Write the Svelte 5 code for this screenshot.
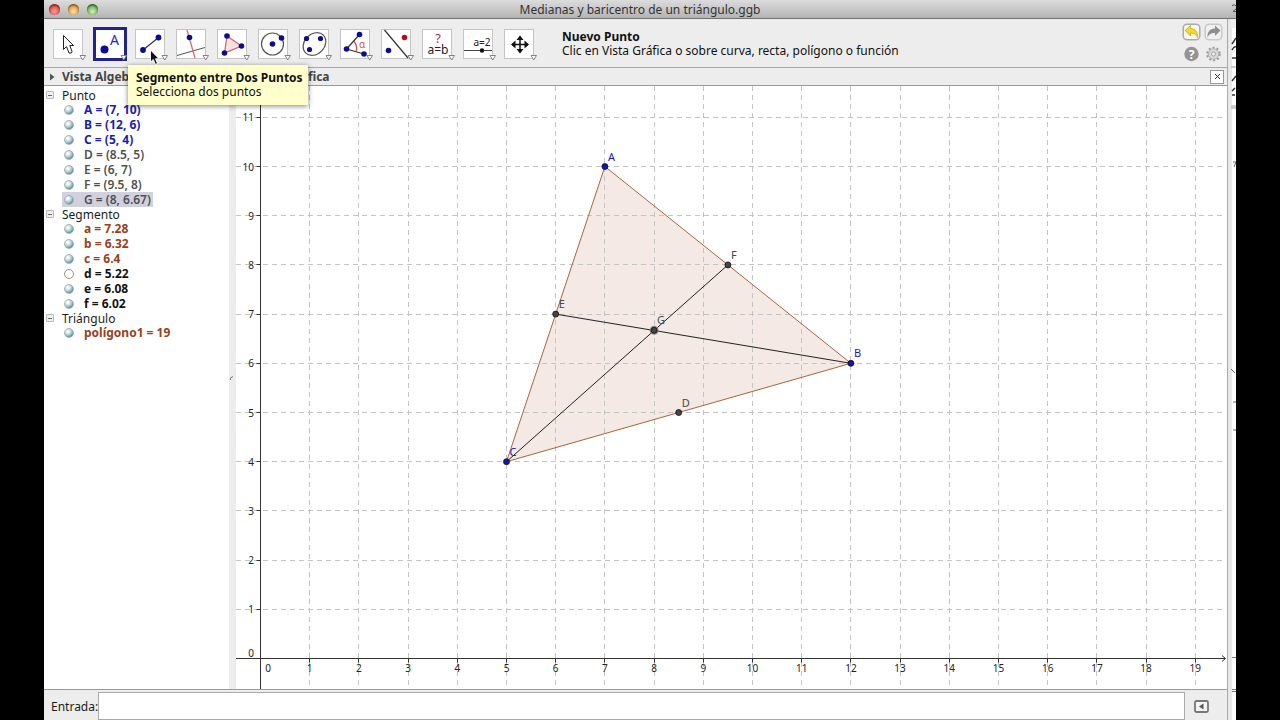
<script>
  const tools = [
    { id: 'move', label: 'Elige y Mueve' },
    { id: 'point', label: 'Nuevo Punto', selected: true },
    { id: 'segment', label: 'Segmento entre Dos Puntos' },
    { id: 'perpendicular', label: 'Recta Perpendicular' },
    { id: 'polygon', label: 'Polígono' },
    { id: 'circle', label: 'Circunferencia' },
    { id: 'conic', label: 'Elipse' },
    { id: 'angle', label: 'Ángulo' },
    { id: 'mirror', label: 'Refleja Objeto' },
    { id: 'relation', label: 'Relación' },
    { id: 'slider', label: 'Deslizador' },
    { id: 'pan', label: 'Desplaza Vista Gráfica' }
  ];

  const groups = [
    {
      name: 'Punto',
      items: [
        { text: 'A = (7, 10)', tone: 'blue', on: true },
        { text: 'B = (12, 6)', tone: 'blue', on: true },
        { text: 'C = (5, 4)', tone: 'blue', on: true },
        { text: 'D = (8.5, 5)', tone: 'gray', on: true },
        { text: 'E = (6, 7)', tone: 'gray', on: true },
        { text: 'F = (9.5, 8)', tone: 'gray', on: true },
        { text: 'G = (8, 6.67)', tone: 'gray', on: true, selected: true }
      ]
    },
    {
      name: 'Segmento',
      items: [
        { text: 'a = 7.28', tone: 'brown', on: true },
        { text: 'b = 6.32', tone: 'brown', on: true },
        { text: 'c = 6.4', tone: 'brown', on: true },
        { text: 'd = 5.22', tone: 'black', on: false },
        { text: 'e = 6.08', tone: 'black', on: true },
        { text: 'f = 6.02', tone: 'black', on: true }
      ]
    },
    { name: 'Triángulo', items: [{ text: 'polígono1 = 19', tone: 'brown', on: true }] }
  ];

  // Graph units to drawing coordinates
  const unit = 49.2;
  const ox = 24.5;
  const oy = 572.5;
  const px = (x) => ox + x * unit;
  const py = (y) => oy - y * unit;
  const grid = (v) => Math.round(v - 0.5) + 0.5;
  const xs = Array.from({ length: 19 }, (_, i) => i + 1);
  const ys = Array.from({ length: 11 }, (_, i) => i + 1);
  const pts = {
    A: [7, 10], B: [12, 6], C: [5, 4],
    D: [8.5, 5], E: [6, 7], F: [9.5, 8], G: [8, 6.67]
  };
  const free = ['A', 'B', 'C'];
  const line = (a, b) => ({
    x1: px(pts[a][0]), y1: py(pts[a][1]), x2: px(pts[b][0]), y2: py(pts[b][1])
  });
  const triangle = free.map((n) => `${px(pts[n][0])},${py(pts[n][1])}`).join(' ');
</script>

<div class="screen">
  <div class="window">
    <header class="titlebar">
      <div class="lights">
        <button class="light red" aria-label="Cerrar"></button>
        <button class="light amber" aria-label="Minimizar"></button>
        <button class="light green" aria-label="Ampliar"></button>
      </div>
      <h1>Medianas y baricentro de un triángulo.ggb</h1>
      <svg class="corner" width="4" height="12" viewBox="0 0 4 12" aria-hidden="true">
        <path d="M0 2.500Q3 1 4 3M4 6L1 8.500H4" fill="none" stroke="#555" />
      </svg>
    </header>

    <div class="body">
      <main class="app">
        <div class="toolbar">
          <div class="tools">
            {#each tools as tool}
              <div class="slot">
                <button class="tool" aria-label={tool.label} aria-pressed={!!tool.selected}>
                  <svg width="41" height="40" viewBox="0 0 41 40">
                    {#if tool.selected}
                      <rect x="1.5" y="4.5" width="31" height="31" fill="#fff" stroke="#23238e" stroke-width="3" />
                    {:else}
                      <rect x="1.5" y="5.5" width="29" height="29" fill="#fff" stroke="#c4c4c4" />
                    {/if}
                    {#if tool.id === 'move'}
                      <path d="M11.5 11.5V25.5L14.5 22.5L17 29H19.5L20 27.5L17.8 21.5H21.5Z" fill="#fff" stroke="#222" stroke-width="1" />
                    {:else if tool.id === 'point'}
                      <circle cx="11.5" cy="25.5" r="4" fill="#0b0b96" />
                      <text x="17" y="21" font-size="14" fill="#2a2ab4">A</text>
                    {:else if tool.id === 'segment'}
                      <path d="M9 26L24.5 13.5" stroke="#333" stroke-width="1.2" />
                      <circle cx="9" cy="26" r="2.9" fill="#0b0b96" />
                      <circle cx="24.5" cy="13.5" r="2.9" fill="#0b0b96" />
                    {:else if tool.id === 'perpendicular'}
                      <path d="M2 31.5L30 23.5" stroke="#555" />
                      <path d="M12 6L20 34" stroke="#d86a6a" stroke-width="1.3" />
                      <circle cx="14.5" cy="13.5" r="2.8" fill="#0b0b96" />
                    {:else if tool.id === 'polygon'}
                      <path d="M11 12L25.5 22L8.5 29Z" fill="#fbe2e0" stroke="#c86464" stroke-width="1.2" />
                      <circle cx="11" cy="12" r="2.8" fill="#0b0b96" />
                      <circle cx="25.5" cy="22" r="2.8" fill="#0b0b96" />
                      <circle cx="8.5" cy="29" r="2.8" fill="#0b0b96" />
                    {:else if tool.id === 'circle'}
                      <circle cx="15.5" cy="20" r="11" fill="none" stroke="#555" stroke-width="1.2" />
                      <circle cx="15.5" cy="20" r="2.8" fill="#0b0b96" />
                      <circle cx="24.5" cy="14" r="2.8" fill="#0b0b96" />
                    {:else if tool.id === 'conic'}
                      <ellipse cx="16.5" cy="20" rx="12.5" ry="10" transform="rotate(-45 16.5 20)" fill="none" stroke="#555" stroke-width="1.2" />
                      <circle cx="8.5" cy="14.5" r="2.6" fill="#0b0b96" />
                      <circle cx="22.5" cy="14.5" r="2.6" fill="#0b0b96" />
                      <circle cx="11.5" cy="25.5" r="2.6" fill="#0b0b96" />
                    {:else if tool.id === 'angle'}
                      <path d="M15 17.5A10 10 0 0 1 17 27.5" fill="none" stroke="#d04848" stroke-width="1.2" />
                      <path d="M20.5 10.5L7.5 25L25 30" fill="none" stroke="#333" stroke-width="1.2" />
                      <text x="20" y="23.5" font-size="10" fill="#c8643c">α</text>
                      <circle cx="20.5" cy="10.5" r="2.8" fill="#0b0b96" />
                      <circle cx="7.5" cy="25" r="2.8" fill="#0b0b96" />
                      <circle cx="25" cy="30" r="2.8" fill="#0b0b96" />
                    {:else if tool.id === 'mirror'}
                      <path d="M4.5 6L28 34" stroke="#333" stroke-width="1.2" />
                      <circle cx="8.5" cy="26.5" r="2.8" fill="#0b0b96" />
                      <circle cx="24.5" cy="13.5" r="2.8" fill="#b01010" />
                    {:else if tool.id === 'relation'}
                      <text x="17" y="19" font-size="13" text-anchor="middle" fill="#c01c38">?</text>
                      <text x="17" y="30" font-size="12" text-anchor="middle" fill="#222">a=b</text>
                    {:else if tool.id === 'slider'}
                      <text x="20" y="22" font-size="10" text-anchor="middle" fill="#222">a=2</text>
                      <path d="M2 26.5H30" stroke="#444" />
                      <circle cx="20" cy="26.5" r="2.2" fill="#111" />
                    {:else}
                      <path d="M9 20.5H25M17 12.5V28.5" stroke="#111" stroke-width="1.5" />
                      <path d="M8 20.5L12.5 16.5V24.5ZM26 20.5L21.500 16.5V24.5ZM17 11.5L13.5 16H20.5ZM17 29.5L13.5 25H20.5Z" fill="#111" />
                    {/if}
                    <path d="M28 31.5H33.5L30.75 36Z" fill="#fff" stroke="#777" stroke-width="0.9" />
                  </svg>
                </button>
                {#if tool.id === 'segment'}
                  <div class="tooltip" role="tooltip">
                    <strong>{tool.label}</strong>
                    <span>Selecciona dos puntos</span>
                  </div>
                  <svg class="cursor" width="12" height="18" viewBox="0 0 12 18" aria-hidden="true">
                    <path d="M1.5 1V13L4.3 10.5L6.5 15.5L8.5 14.5L6.5 9.8H10Z" fill="#111" stroke="#fff" stroke-width="0.9" />
                  </svg>
                {/if}
              </div>
            {/each}
          </div>
          <p class="help"><strong>Nuevo Punto</strong><span>Clic en Vista Gráfica o sobre curva, recta, polígono o función</span></p>
          <div class="actions">
            <button aria-label="Deshace">
              <svg width="19" height="18" viewBox="0 0 19 18">
                <rect x="1.2" y="1.2" width="16.6" height="15.6" rx="4" fill="#f6f6f2" stroke="#aaa" stroke-width="1.5" />
                <path d="M3 7.5L8.5 2.5V5.5C13 5.5 16 8.5 15.5 14.5C14 11 12 10 8.5 10V13Z" fill="#f2dc28" stroke="#c8a818" stroke-width="0.8" />
              </svg>
            </button>
            <button aria-label="Rehace">
              <svg width="19" height="18" viewBox="0 0 19 18">
                <rect x="1.2" y="1.2" width="16.6" height="15.6" rx="4" fill="#f0f0f0" stroke="#c8c8c8" stroke-width="1.5" />
                <path d="M16.5 7.5L11 2.5V5.5C6.5 5.5 3 8.5 3.5 14.5C5 11 7.5 10 11 10V13Z" fill="#8e8e8e" />
              </svg>
            </button>
            <button aria-label="Ayuda">
              <svg width="19" height="18" viewBox="0 0 19 18">
                <circle cx="9.5" cy="9" r="7.2" fill="#949494" />
                <text x="9.5" y="13.5" font-size="12" font-weight="700" text-anchor="middle" fill="#fff">?</text>
              </svg>
            </button>
            <button aria-label="Preferencias">
              <svg width="19" height="18" viewBox="0 0 19 18">
                <circle cx="9.5" cy="9" r="6.3" fill="none" stroke="#9a9a9a" stroke-width="2" stroke-dasharray="2 2" />
                <circle cx="9.5" cy="9" r="5.2" fill="#d8d8d8" stroke="#a4a4a4" stroke-width="0.8" />
                <circle cx="9.5" cy="9" r="2" fill="#f2f2f2" stroke="#a4a4a4" />
              </svg>
            </button>
          </div>
        </div>

        <div class="views">
          <section class="algebra">
            <h2><svg width="12" height="10" viewBox="0 0 12 10" aria-hidden="true"><path d="M0 1.5L4.5 5L0 8.5Z" fill="#555" /></svg>Vista Algebraica</h2>
            <div class="tree">
              {#each groups as group}
                <h3><span class="fold"></span>{group.name}</h3>
                <ul>
                  {#each group.items as item}
                    <li>
                      <span class="item {item.tone}" class:selected={item.selected}>
                        <span class="marble" class:off={!item.on}></span>{item.text}
                      </span>
                    </li>
                  {/each}
                </ul>
              {/each}
            </div>
          </section>

          <div class="splitter" aria-hidden="true">
            <svg width="7" height="8" viewBox="0 0 7 8"><path d="M4 1.5L1.500 3V5" fill="none" stroke="#777" /></svg>
          </div>

          <section class="graphics">
            <h2>Vista Gráfica
              <button class="close" aria-label="Cerrar vista">
                <svg width="7" height="7" viewBox="0 0 7 7"><path d="M1 1L6 6M6 1L1 6" stroke="#333" /></svg>
              </button>
            </h2>
            <div class="plot">
              <svg viewBox="0 0 990 603" preserveAspectRatio="xMinYMax meet" role="img" aria-label="Triángulo ABC con sus medianas">
                <polygon points={triangle} fill="#f4e9e5" />
                <g stroke="#c4c4c4" stroke-dasharray="5 4">
                  {#each xs as n}
                    <line x1={grid(px(n))} x2={grid(px(n))} y1="0" y2="603" />
                  {/each}
                  {#each ys as n}
                    <line x1="0" x2="990" y1={grid(py(n))} y2={grid(py(n))} />
                  {/each}
                </g>
                <g stroke="#333">
                  <line x1={ox} x2={ox} y1="0" y2="603" />
                  <line x1="0" x2="989" y1={oy} y2={oy} />
                  <path d="M986 569.5L989.5 572.5L986 575.5" fill="none" />
                  {#each xs as n}
                    <line x1={grid(px(n))} x2={grid(px(n))} y1={oy} y2={oy + 4} />
                  {/each}
                  {#each ys as n}
                    <line x1={ox - 4} x2={ox} y1={grid(py(n))} y2={grid(py(n))} />
                  {/each}
                </g>
                <g class="scale">
                  <text x="32" y="586" text-anchor="middle">0</text>
                  <text x="18" y="571" text-anchor="end">0</text>
                  {#each xs as n}
                    <text x={px(n)} y="586" text-anchor="middle">{n}</text>
                  {/each}
                  {#each ys as n}
                    <text x="18" y={py(n) + 4} text-anchor="end">{n}</text>
                  {/each}
                </g>
                <polygon points={triangle} fill="none" stroke="#a8643c" />
                <line {...line('E', 'B')} stroke="#222" />
                <line {...line('C', 'F')} stroke="#222" />
                <circle cx={px(8)} cy={py(6.67)} r="4.5" fill="#888" />
                {#each Object.entries(pts) as [name, [x, y]]}
                  <circle cx={px(x)} cy={py(y)} r="3" fill={free.includes(name) ? '#1414b4' : '#444'} stroke="#111" stroke-width="0.8" />
                  <text class="name" x={px(x) + 3} y={py(y) - 6} fill={free.includes(name) ? '#1c1cb4' : '#484848'}>{name}</text>
                {/each}
              </svg>
            </div>
          </section>
        </div>

        <form class="entry" onsubmit={(e) => e.preventDefault()}>
          <label for="entrada">Entrada:</label>
          <input id="entrada" type="text" autocomplete="off" />
          <button type="button" aria-label="Ayuda de entrada">
            <svg width="15" height="13" viewBox="0 0 15 13">
              <rect x="1" y="1" width="13" height="11" rx="1.5" fill="#f4f4f4" stroke="#777" stroke-width="1.8" />
              <path d="M9.5 3.5V9.5L5 6.5Z" fill="#555" />
            </svg>
          </button>
        </form>
      </main>

      <div class="edge" aria-hidden="true">
        <svg width="5" height="701" viewBox="0 0 5 701">
          <rect width="5" height="9" fill="#eee" />
          <path d="M1 25L5 19M1 31Q3 27 5 28M1 39H5M1 62L5 57M1 72L4 69M1 76H4" stroke="#333" stroke-width="1.5" fill="none" />
          <rect y="47" width="5" height="2" fill="#ccc" />
          <rect y="86" width="5" height="4" fill="#ccc" />
          <path d="M2 143H5L3 148M0 350L4 354M2 383H5M2 411H5" stroke="#666" fill="none" />
          <path d="M1 638.5H5M1 670.5H5M1 672.5H5" stroke="#777" />
        </svg>
      </div>
    </div>
  </div>
</div>

<style>
  :global(body) {
    margin: 0;
    background: #000;
  }

  .screen {
    box-sizing: border-box;
    height: 100vh;
    padding: 0 44px;
    background: #000;
    font-family: 'Noto Sans', 'Open Sans', sans-serif;
    font-size: 12px;
    line-height: 15px;
    color: #1c1c1c;
  }

  .window {
    height: 100%;
    display: flex;
    flex-direction: column;
    overflow: hidden;
    background: #ededed;
  }

  h1, h2, h3, ul, p {
    margin: 0;
    padding: 0;
    font-size: inherit;
  }

  button {
    padding: 0;
    border: 0;
    background: none;
    font: inherit;
    display: block;
  }

  svg {
    display: block;
  }

  .titlebar {
    display: grid;
    grid-template-columns: 1fr auto 1fr;
    align-items: center;
    height: 18px;
    flex: none;
    border-bottom: 1px solid #707070;
    background: linear-gradient(#dcdcdc, #b4b4b4);
  }

  .titlebar h1 {
    font-weight: 400;
    color: #333;
  }

  .corner {
    justify-self: end;
  }

  .lights {
    display: flex;
    gap: 8px;
    padding-left: 5px;
  }

  .light {
    width: 11px;
    height: 11px;
    border-radius: 50%;
    box-shadow: inset 0 1px 2px rgba(0, 0, 0, 0.6);
  }

  .red { background: radial-gradient(circle at 50% 70%, #ff9c94, #d8443c 70%); }
  .amber { background: radial-gradient(circle at 50% 70%, #ffe09a, #e0963a 70%); }
  .green { background: radial-gradient(circle at 50% 70%, #d0f4b4, #64a850 70%); }

  .body {
    flex: 1;
    display: flex;
    min-height: 0;
  }

  .app {
    flex: 1;
    min-width: 0;
    display: flex;
    flex-direction: column;
  }

  .toolbar {
    display: flex;
    align-items: center;
    box-sizing: border-box;
    height: 49px;
    flex: none;
    padding: 2px 4px 0 8px;
    border-bottom: 1px solid #a8a8a8;
  }

  .tools {
    display: flex;
  }

  .slot {
    position: relative;
  }

  .tooltip {
    position: absolute;
    z-index: 2;
    left: -6px;
    top: 41px;
    padding: 6px 5px 6px 8px;
    background: #ffffcb;
    color: #111;
    white-space: nowrap;
    box-shadow: 0 1px 5px rgba(0, 0, 0, 0.5);
  }

  .tooltip strong,
  .tooltip span,
  .help strong,
  .help span {
    display: block;
    line-height: 14px;
  }

  .cursor {
    position: absolute;
    z-index: 3;
    left: 15px;
    top: 25px;
  }

  .help {
    flex: 1;
    padding-left: 18px;
    color: #111;
  }

  .actions {
    display: grid;
    grid-template-columns: auto auto;
    gap: 4px 3px;
    padding-bottom: 2px;
  }

  .views {
    flex: 1;
    display: flex;
    min-height: 0;
  }

  .algebra {
    flex: none;
    width: 185px;
    background: #fff;
  }

  h2 {
    display: flex;
    align-items: center;
    height: 17px;
    border-bottom: 1px solid #999;
    background: #ededed;
    color: #444;
  }

  .algebra h2 {
    padding-left: 6px;
  }

  .tree {
    padding: 2px 0 0 2px;
  }

  h3 {
    display: flex;
    align-items: center;
    gap: 8px;
    height: 14px;
    font-weight: 400;
  }

  .fold {
    box-sizing: border-box;
    width: 8px;
    height: 8px;
    border: 1px solid #b8b8b8;
    border-radius: 1px;
    background: linear-gradient(#666, #666) center / 4px 1px no-repeat #f0f0f0;
  }

  ul {
    list-style: none;
    padding-left: 16px;
  }

  li {
    display: flex;
    height: 15px;
  }

  .item {
    display: flex;
    align-items: center;
    gap: 10px;
    padding: 0 2px;
    font-weight: 700;
  }

  .blue { color: #1c1cb4; }
  .gray { color: #505050; font-weight: 600; }
  .brown { color: #993f1c; }
  .black { color: #111; }
  .selected { background: #d0d0de; }

  .marble {
    box-sizing: border-box;
    width: 10px;
    height: 10px;
    border-radius: 50%;
    border: 1px solid #a4b4b8;
    background: radial-gradient(circle at 35% 30%, #fff 10%, #a4c8d0 50%, #34606c 95%);
  }

  .marble.off {
    border-color: #a09080;
    background: #fff;
  }

  .splitter {
    flex: none;
    display: flex;
    align-items: center;
    width: 7px;
    background: #ececec;
  }

  .graphics {
    flex: 1;
    min-width: 0;
    display: flex;
    flex-direction: column;
    background: #fff;
  }

  .graphics h2 {
    flex: none;
    justify-content: space-between;
    padding: 0 3px 0 18px;
  }

  .close {
    box-sizing: border-box;
    display: grid;
    place-items: center;
    width: 14px;
    height: 14px;
    border: 1px solid #999;
    background: #fff;
  }

  .plot {
    flex: 1;
    min-height: 0;
  }

  .plot svg {
    width: 100%;
    height: 100%;
  }

  .scale {
    font-size: 10px;
    fill: #222;
  }

  .name {
    font-size: 11px;
  }

  .entry {
    flex: none;
    display: flex;
    align-items: center;
    box-sizing: border-box;
    height: 31px;
    padding: 2px 18px 0 7px;
    border-top: 1px solid #999;
  }

  .entry input {
    flex: 1;
    min-width: 0;
    box-sizing: border-box;
    height: 28px;
    margin: 0 9px 0 0;
    border: 1px solid #aaa;
    background: #fff;
    font: inherit;
  }

  .edge {
    flex: none;
    width: 5px;
    padding-left: 3px;
    overflow: hidden;
    border-left: 1px solid #aaa;
    background: linear-gradient(90deg, #e8e8e8 4px, #fff 4px);
  }
</style>
